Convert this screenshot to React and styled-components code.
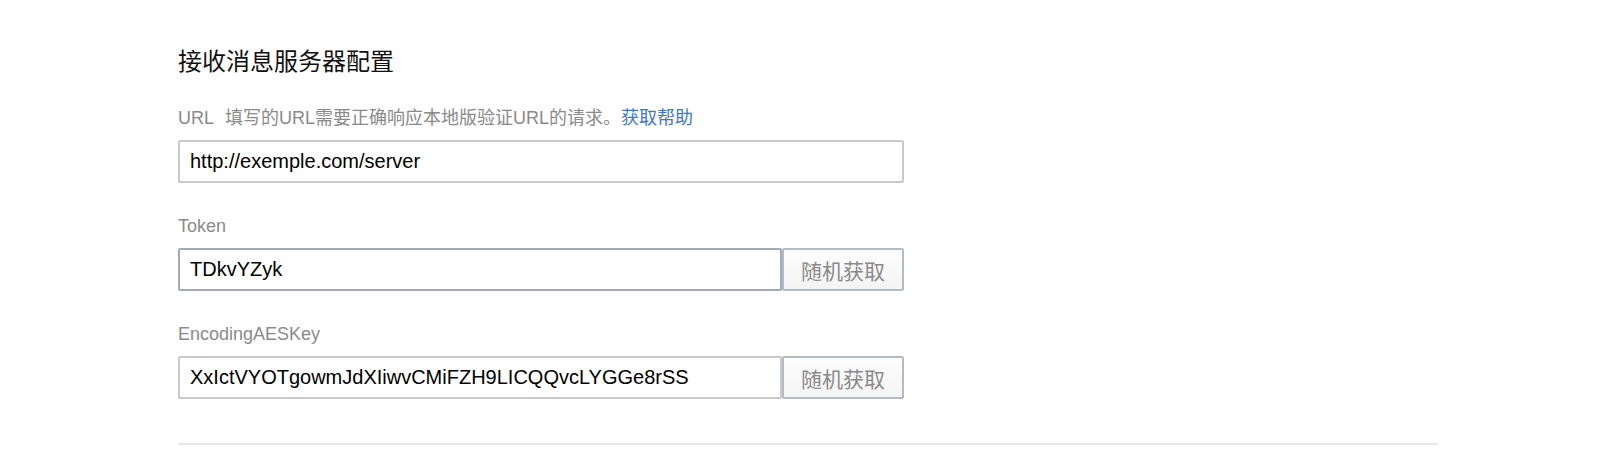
import React from "react";
import styled, { createGlobalStyle } from "styled-components";

const GlobalStyle = createGlobalStyle`
  body {
    margin: 0;
    background: #fff;
    font-family: "Liberation Sans", "Noto Sans CJK SC", sans-serif;
  }
`;

const fields = [
  { name: "Token", value: "TDkvYZyk", focused: true },
  {
    name: "EncodingAESKey",
    value: "XxIctVYOTgowmJdXIiwvCMiFZH9LICQQvcLYGGe8rSS",
  },
];

const App = () => {
  return (
    <Page>
      <GlobalStyle />
      <Section>
        <Title>接收消息服务器配置</Title>

        <Field>
          <Label>
            <span className="name">URL</span>
            填写的URL需要正确响应本地版验证URL的请求。
            <a href="#help">获取帮助</a>
          </Label>
          <Input readOnly value="http://exemple.com/server" $width="726px" />
        </Field>

        {fields.map((f) => (
          <Field key={f.name}>
            <Label>{f.name}</Label>
            <Row>
              <Input readOnly value={f.value} $focused={f.focused} />
              <RandomButton>随机获取</RandomButton>
            </Row>
          </Field>
        ))}
      </Section>
      <Divider />
    </Page>
  );
};

const Page = styled.div`
  width: 1260px;
  margin: 0 auto;
  padding-top: 46px;
`;

const Section = styled.div`
  width: 726px;
`;

const Title = styled.h3`
  margin: 0;
  font-size: 24px;
  line-height: 32px;
  font-weight: normal;
  color: #111;
`;

const Field = styled.div`
  margin-top: 31px;

  &:nth-of-type(1) {
    margin-top: 28px;
  }
`;

const Label = styled.div`
  font-size: 18px;
  line-height: 24px;
  color: #8a8a8a;
  margin-bottom: 10px;

  .name {
    margin-right: 11px;
  }

  a {
    color: #3e78c2;
    text-decoration: none;
  }
`;

const Row = styled.div`
  display: flex;
  align-items: stretch;
  width: 726px;
`;

const Input = styled.input`
  box-sizing: border-box;
  width: ${(p) => p.$width || "auto"};
  flex: ${(p) => (p.$width ? "none" : "1")};
  min-width: 0;
  height: 43px;
  padding: 0 10px;
  border: 2px solid ${(p) => (p.$focused ? "#a1aab5" : "#c9c9c9")};
  border-radius: 2px;
  font-family: "Liberation Sans", "Noto Sans CJK SC", sans-serif;
  font-size: 20px;
  color: #000;
  background: #fff;
  outline: none;
`;

const RandomButton = styled.button`
  box-sizing: border-box;
  width: 122px;
  height: 43px;
  border: 2px solid #b3bbc6;
  border-radius: 2px;
  background: linear-gradient(#fdfdfd, #f4f4f4);
  font-family: "Liberation Sans", "Noto Sans CJK SC", sans-serif;
  font-size: 21px;
  color: #8a8a8a;
  padding: 0;
  cursor: pointer;
`;

const Divider = styled.div`
  margin-top: 44px;
  height: 2px;
  background: #e5e5ea;
`;

export default App;
